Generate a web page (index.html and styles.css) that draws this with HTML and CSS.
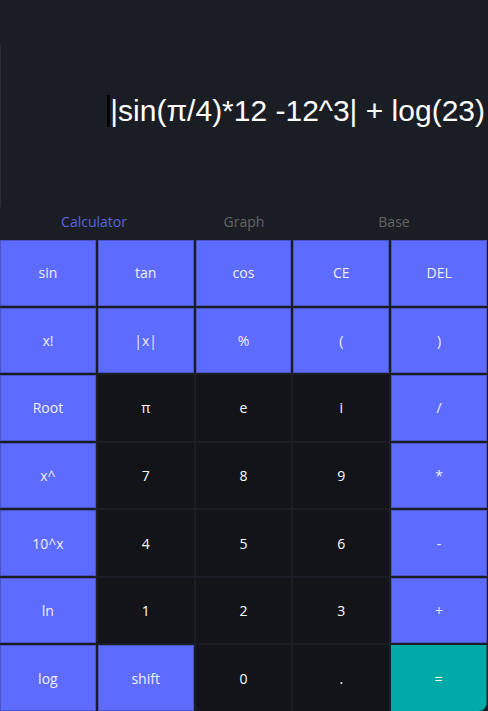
FILE: index.html
```html
<!DOCTYPE html>
<html>
<head>
<meta charset="utf-8">
<link rel="stylesheet" href="styles.css">
</head>
<body>
<div class="app">
  <div class="top"></div>
  <div class="display">
    <span class="caret"></span><span class="expr">|sin(π/4)*12 -12^3| + log(23)</span>
  </div>
  <div class="tabs">
    <div class="tab active">Calculator</div>
    <div class="tab">Graph</div>
    <div class="tab">Base</div>
  </div>
  <div class="keys">
    <div class="key fn">sin</div>
    <div class="key fn">tan</div>
    <div class="key fn">cos</div>
    <div class="key fn">CE</div>
    <div class="key fn">DEL</div>

    <div class="key fn">x!</div>
    <div class="key fn">|x|</div>
    <div class="key fn">%</div>
    <div class="key fn">(</div>
    <div class="key fn">)</div>

    <div class="key fn">Root</div>
    <div class="key num">π</div>
    <div class="key num">e</div>
    <div class="key num">i</div>
    <div class="key fn">/</div>

    <div class="key fn">x^</div>
    <div class="key num">7</div>
    <div class="key num">8</div>
    <div class="key num">9</div>
    <div class="key fn">*</div>

    <div class="key fn">10^x</div>
    <div class="key num">4</div>
    <div class="key num">5</div>
    <div class="key num">6</div>
    <div class="key fn">-</div>

    <div class="key fn">ln</div>
    <div class="key num">1</div>
    <div class="key num">2</div>
    <div class="key num">3</div>
    <div class="key fn">+</div>

    <div class="key fn">log</div>
    <div class="key fn">shift</div>
    <div class="key num">0</div>
    <div class="key num">.</div>
    <div class="key eq">=</div>
  </div>
</div>
</body>
</html>
```
FILE: styles.css
```css
html, body {
  margin: 0;
  padding: 0;
  background: #1b1d24;
}
.app {
  width: 488px;
  height: 711px;
  display: flex;
  flex-direction: column;
  background: #1b1d24;
  overflow: hidden;
}
.top {
  height: 45px;
  flex: none;
}
.display {
  height: 162px;
  flex: none;
  box-sizing: border-box;
  border-left: 1px solid #2a2c33;
  display: flex;
  align-items: center;
  justify-content: flex-end;
  padding-right: 3px;
  padding-bottom: 30px;
  overflow: hidden;
  white-space: nowrap;
}
.expr {
  font-family: "Liberation Sans", Arial, sans-serif;
  font-size: 30px;
  color: #ffffff;
  line-height: 34px;
}
.caret {
  display: inline-block;
  width: 3px;
  height: 32px;
  background: #050507;
  flex: none;
}
.tabs {
  height: 33px;
  flex: none;
  width: 450px;
  margin-left: 19px;
  display: grid;
  grid-template-columns: repeat(3, 1fr);
  align-items: center;
  font-family: "Open Sans", sans-serif;
  font-size: 14px;
}
.tab {
  text-align: center;
  color: #656565;
  margin-top: -4px;
}
.tab.active {
  color: #5866e0;
}
.keys {
  flex: 1;
  display: grid;
  grid-template-columns: repeat(5, 1fr);
  grid-template-rows: repeat(7, 1fr);
  gap: 2px;
  padding-right: 1px;
}
.key {
  display: flex;
  align-items: center;
  justify-content: center;
  font-family: "Open Sans", sans-serif;
  font-size: 14px;
  box-sizing: border-box;
}
.fn {
  background: #5d6bfe;
  border: 1px solid #4a54c6;
  color: #eef0ff;
}
.num {
  background: #131418;
  color: #ffffff;
}
.eq {
  background: #01aaa7;
  color: #ffffff;
  border-right: 1px solid #0a6e6c;
  border-bottom-right-radius: 8px;
}
```
